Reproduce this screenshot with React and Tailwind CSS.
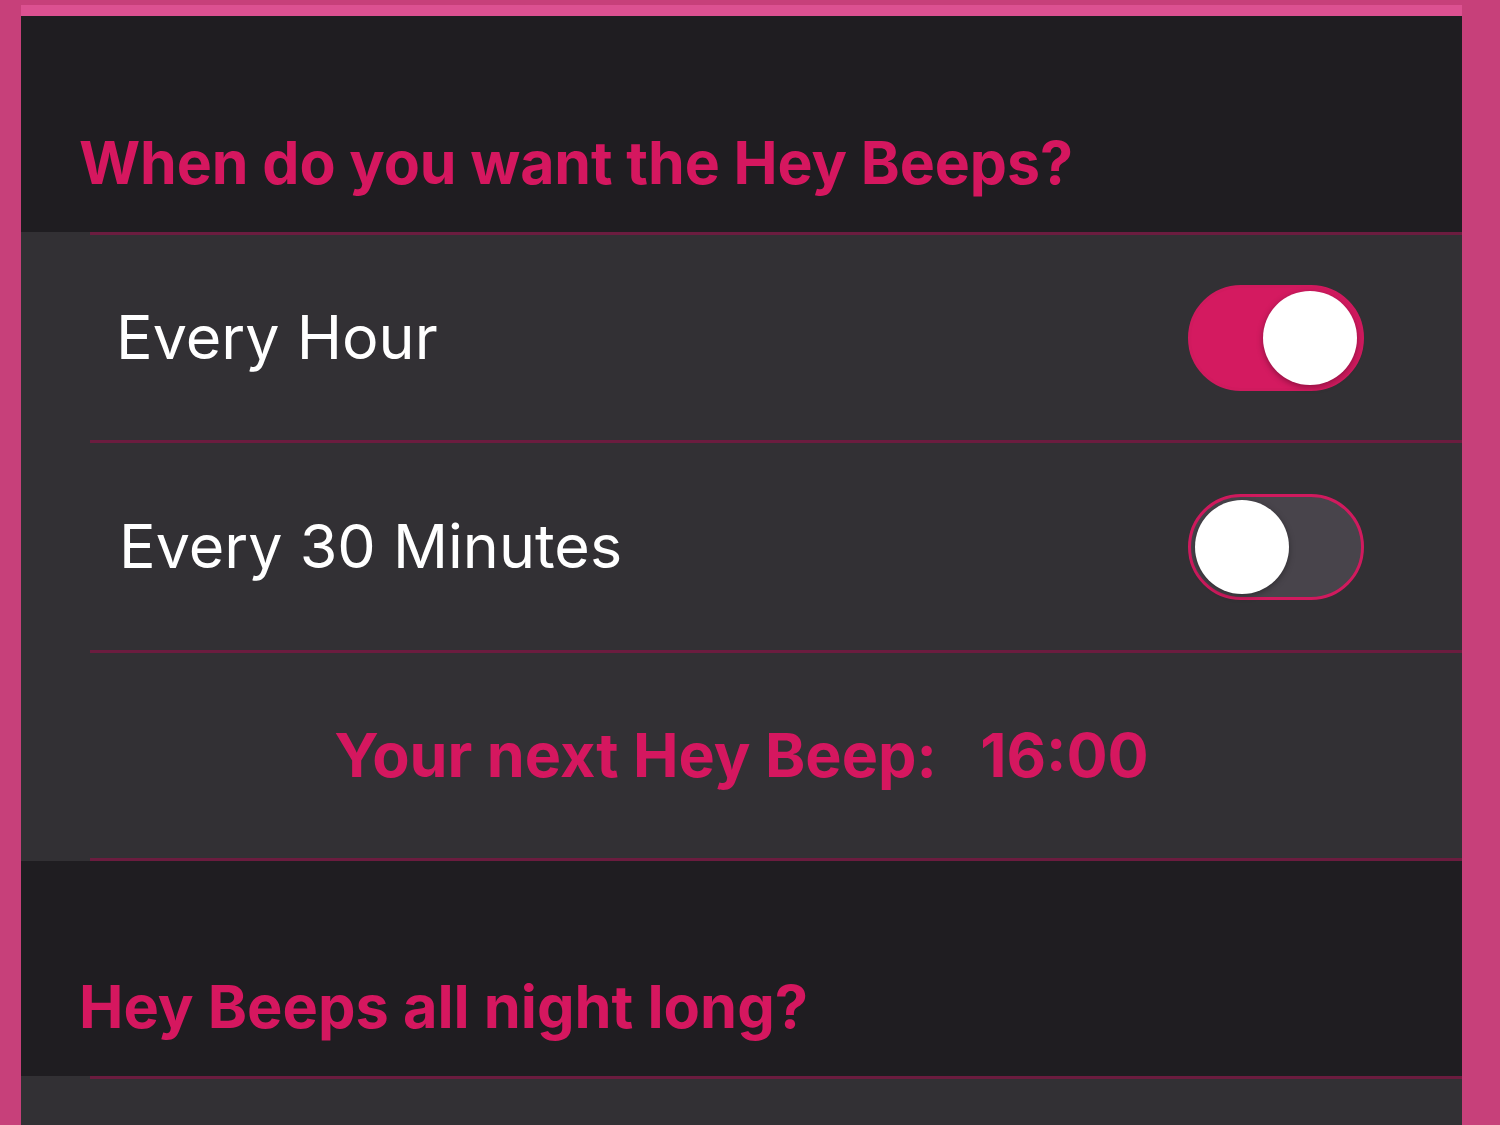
import React from "react";

function Toggle({ on }) {
  return (
    <div
      className={
        "w-[176px] h-[106px] rounded-full border-[3px] border-[#d01a5e] flex items-center px-[4px] " +
        (on ? "bg-[#d41a60] justify-end" : "bg-[#48444b] justify-start")
      }
    >
      <div className="w-[94px] h-[94px] rounded-full bg-white shadow-[0_2px_6px_rgba(0,0,0,0.35)]" />
    </div>
  );
}

function Sep() {
  return <div className="ml-[69px] h-[3px] bg-[#6b1c3f]" />;
}

export default function App() {
  return (
    <div
      className="w-[1500px] h-[1125px] overflow-hidden bg-[#c7407a]"
      style={{ fontFamily: "Inter, 'Liberation Sans', sans-serif" }}
    >
      <div className="h-[5px] bg-[#c7407a]" />
      <div className="ml-[21px] w-[1441px] h-[11px] bg-[#dc5191]" />
      <div className="ml-[21px] w-[1441px] bg-[#323034]">
        <div className="bg-[#1f1d21] h-[216px] flex items-end pl-[58px] pb-[40px]">
          <span className="text-[#d5175f] font-bold text-[59px] leading-none tracking-[-0.1px]">
            When do you want the Hey Beeps?
          </span>
        </div>
        <Sep />
        <div className="h-[205px] flex items-center justify-between pl-[95px] pr-[98px]">
          <span className="text-white text-[61px] leading-none">Every Hour</span>
          <Toggle on />
        </div>
        <Sep />
        <div className="h-[207px] flex items-center justify-between pl-[98px] pr-[98px]">
          <span className="text-white text-[61px] leading-none">Every 30 Minutes</span>
          <Toggle on={false} />
        </div>
        <Sep />
        <div className="h-[205px] flex items-center justify-center">
          <span className="text-[#d5175f] font-bold text-[61px] leading-none">
            Your next Hey Beep:&nbsp;&nbsp;&nbsp;16:00
          </span>
        </div>
        <Sep />
        <div className="bg-[#1f1d21] h-[215px] flex items-end pl-[58px] pb-[40px]">
          <span className="text-[#d5175f] font-bold text-[59.5px] leading-none">
            Hey Beeps all night long?
          </span>
        </div>
        <Sep />
        <div className="h-[60px]" />
      </div>
    </div>
  );
}
